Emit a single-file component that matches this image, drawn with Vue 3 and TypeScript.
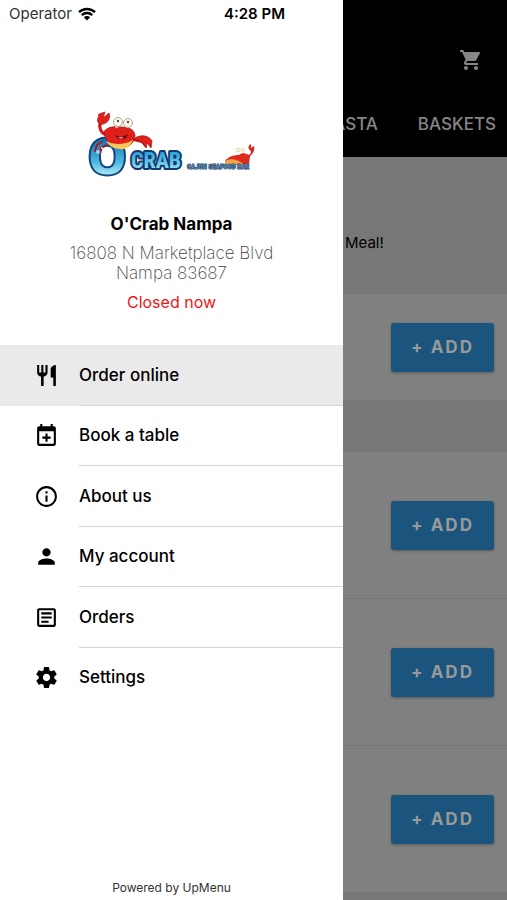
<script setup lang="ts">
interface MenuEntry {
  label: string
  icon: string
}

const menu: MenuEntry[] = [
  {
    label: 'Order online',
    icon: 'M11 9H9V2H7v7H5V2H3v7c0 2.12 1.66 3.84 3.75 3.97V22h2.5v-9.03C11.34 12.84 13 11.12 13 9V2h-2v7zm5-3v8h2.5v8H21V2c-2.76 0-5 2.24-5 4z',
  },
  {
    label: 'Book a table',
    icon: 'M19 3h-1V1h-2v2H8V1H6v2H5C3.9 3 3 3.9 3 5v15c0 1.1.9 2 2 2h14c1.1 0 2-.9 2-2V5c0-1.1-.9-2-2-2zm0 17H5V8h14v12zM11 10h2v3h3v2h-3v3h-2v-3H8v-2h3z',
  },
  {
    label: 'About us',
    icon: 'M11 7h2v2h-2zm0 4h2v6h-2zm1-9C6.48 2 2 6.48 2 12s4.48 10 10 10 10-4.48 10-10S17.52 2 12 2zm0 18c-4.41 0-8-3.59-8-8s3.59-8 8-8 8 3.59 8 8-3.59 8-8 8z',
  },
  {
    label: 'My account',
    icon: 'M12 12c2.21 0 4-1.79 4-4s-1.79-4-4-4-4 1.79-4 4 1.79 4 4 4zm0 2c-2.67 0-8 1.34-8 4v2h16v-2c0-2.66-5.33-4-8-4z',
  },
  {
    label: 'Orders',
    icon: 'M19 5v14H5V5h14m0-2H5c-1.1 0-2 .9-2 2v14c0 1.1.9 2 2 2h14c1.1 0 2-.9 2-2V5c0-1.1-.9-2-2-2zM14 17H7v-2h7v2zm3-4H7v-2h10v2zm0-4H7V7h10v2z',
  },
  {
    label: 'Settings',
    icon: 'M19.43 12.98c.04-.32.07-.64.07-.98s-.03-.66-.07-.98l2.11-1.65c.19-.15.24-.42.12-.64l-2-3.46c-.12-.22-.39-.3-.61-.22l-2.49 1c-.52-.4-1.08-.73-1.69-.98l-.38-2.65C14.46 2.18 14.25 2 14 2h-4c-.25 0-.46.18-.49.42l-.38 2.65c-.61.25-1.17.59-1.69.98l-2.49-1c-.23-.09-.49 0-.61.22l-2 3.46c-.13.22-.07.49.12.64l2.11 1.65c-.04.32-.07.65-.07.98s.03.66.07.98l-2.11 1.65c-.19.15-.24.42-.12.64l2 3.46c.12.22.39.3.61.22l2.49-1c.52.4 1.08.73 1.69.98l.38 2.65c.03.24.24.42.49.42h4c.25 0 .46-.18.49-.42l.38-2.65c.61-.25 1.17-.59 1.69-.98l2.49 1c.23.09.49 0 .61-.22l2-3.46c.12-.22.07-.49-.12-.64l-2.11-1.65zM12 15.5c-1.93 0-3.5-1.57-3.5-3.5s1.57-3.5 3.5-3.5 3.5 1.57 3.5 3.5-1.57 3.5-3.5 3.5z',
  },
]

const active = 'Order online'
const dishes: number[] = [1, 2, 3]
</script>

<template>
  <div class="app">
    <aside class="drawer">
      <div class="status">
        <span class="carrier">Operator</span>
        <svg class="wifi" viewBox="0 0 18 14" aria-hidden="true">
          <path d="M1 5.2a11.6 11.6 0 0 1 16 0M3.8 8.1a7.6 7.6 0 0 1 10.4 0" />
          <path class="dot" d="M9 13.6 5.8 10.3a4.6 4.6 0 0 1 6.4 0z" />
        </svg>
        <time class="clock">4:28 PM</time>
      </div>

      <header class="restaurant">
        <svg class="logo" viewBox="0 0 175 74" role="img" aria-label="O'Crab">
          <defs>
            <linearGradient id="sea" x1="0" y1="0" x2="0" y2="1">
              <stop offset="0.3" stop-color="#1478b8" />
              <stop offset="0.6" stop-color="#4fb8de" />
              <stop offset="0.8" stop-color="#b5ecf8" />
            </linearGradient>
            <linearGradient id="wave" x1="0" y1="0" x2="0" y2="1">
              <stop offset="0.2" stop-color="#2fa4d8" />
              <stop offset="0.8" stop-color="#8fdcf2" />
            </linearGradient>
          </defs>
          <text class="big" x="3" y="67">O</text>
          <text class="word" x="47" y="60">CRAB</text>
          <g>
            <path d="M18 34l-5 3-2 6M22 37l-5 3-1 5M50 32l8 2 4 5" fill="none" stroke="#b91512" stroke-width="2" stroke-linecap="round" />
            <path d="M22 27C17 25 15 20 16 14" fill="none" stroke="#d51b18" stroke-width="3" />
            <path d="M17 17C12 19 16 18 19 16c5-1 8-6 6-11l-6 5 2-6-6 2c-1 1 0 3-1 4-1 2-1 4 3 7z" fill="#e3211c" stroke="#a81210" stroke-width=".7" />
            <path d="M50 31c5-5 15-4 18 2l-1 7-4-5-1 4-4-5z" fill="#de211c" stroke="#a81210" stroke-width=".7" />
            <path d="M20 24c2-4 7-6 17-5 9 0 13 3 14 8 0 8-7 13-14 13-9 0-16-7-17-16z" fill="#df201b" stroke="#a81210" stroke-width=".8" />
            <path d="M22 33c8 4 18 4 27-1-3 7-7 10-13 9-6 0-11-3-14-8z" fill="#fbc858" />
            <path d="M31 27c4 2 9 2 13-1-1 4-3 5-6 5s-6-1-7-4z" fill="#6d0b0b" />
            <path d="M34 29.500c2-1 4-1 6 0-2 1.500-4 1.500-6 0z" fill="#f08175" />
            <path d="M33 20l-1-4M44 20l1-4" stroke="#c9c9ad" stroke-width="3" />
            <circle cx="34" cy="14" r="4.500" fill="#fbfaec" stroke="#aaa895" />
            <circle cx="44" cy="15" r="4.500" fill="#fbfaec" stroke="#aaa895" />
            <circle cx="34" cy="13" r="1.200" fill="#5b5535" />
            <circle cx="44" cy="14" r="1.200" fill="#5b5535" />
          </g>
          <circle cx="14" cy="44" r="2" fill="#8fd6ef" />
          <circle cx="18" cy="40" r="1" fill="#c4edf8" />
          <path d="M141 53c3-4 8-6 14-6 3-3 8-2 11 1l-1 8c-8 1-16 1-24 0z" fill="#de2b1d" />
          <path d="M163 48c4-2 5-4 3-6-3-2-1-5 1-6v4l3-2c1 4-1 8-5 11z" fill="#df201b" />
          <path d="M141 53c5-3 13-2 18 3h-18z" fill="#f4a44a" />
          <circle cx="154" cy="42" r="2" fill="#fbf4d8" stroke="#d0c9a8" stroke-width=".6" />
          <circle cx="159" cy="42" r="2" fill="#fbf4d8" stroke="#d0c9a8" stroke-width=".6" />
          <text class="tagline" x="103" y="61">CAJUN SEAFOOD BAR</text>
        </svg>
        <h1 class="name">O'Crab Nampa</h1>
        <address class="address">16808 N Marketplace Blvd<br />Nampa 83687</address>
        <p class="closed">Closed now</p>
      </header>

      <nav class="menu">
        <a
          v-for="entry in menu"
          :key="entry.label"
          href="#"
          class="entry"
          :class="{ active: entry.label === active }"
        >
          <svg class="icon" viewBox="0 0 24 24" aria-hidden="true"><path :d="entry.icon" /></svg>
          <span class="label">{{ entry.label }}</span>
        </a>
      </nav>

      <footer class="powered">Powered by UpMenu</footer>
    </aside>

    <main class="page">
      <div class="topbar">
        <button class="cart" type="button" aria-label="Cart">
          <svg viewBox="0 0 24 24" aria-hidden="true">
            <path d="M7 18c-1.1 0-1.99.9-1.99 2S5.9 22 7 22s2-.9 2-2-.9-2-2-2zM1 2v2h2l3.6 7.59-1.35 2.45c-.16.28-.25.61-.25.96 0 1.1.9 2 2 2h12v-2H7.42c-.14 0-.25-.11-.25-.25l.03-.12.9-1.63h7.45c.75 0 1.41-.41 1.75-1.03l3.58-6.49c.08-.14.12-.31.12-.48 0-.55-.45-1-1-1H5.21l-.94-2H1zm16 16c-1.1 0-1.99.9-1.99 2s.89 2 1.99 2 2-.9 2-2-.9-2-2-2z" />
          </svg>
        </button>
        <div class="tabs">
          <a href="#">PASTA</a>
          <a href="#">BASKETS</a>
        </div>
      </div>
      <p class="note">Meal!</p>
      <div class="dish first"><button class="add" type="button">+ ADD</button></div>
      <div class="band"></div>
      <div v-for="dish in dishes" :key="dish" class="dish">
        <button class="add" type="button">+ ADD</button>
      </div>
    </main>
  </div>
</template>

<style>
body {
  margin: 0;
  background: #777;
}
</style>

<style scoped>
.app {
  display: flex;
  min-height: 100vh;
  font-family: Inter, 'Liberation Sans', sans-serif;
  color: #000;
}
.app * {
  box-sizing: border-box;
}
a {
  color: inherit;
  text-decoration: none;
}
.drawer {
  flex: 0 0 343px;
  display: flex;
  flex-direction: column;
  background: #fff;
}
.status {
  display: grid;
  grid-template-columns: auto 18px 1fr;
  align-items: center;
  gap: 6px;
  height: 27px;
  padding: 0 58px 0 9px;
  font-size: 15px;
}
.carrier {
  color: #333;
}
.wifi {
  width: 18px;
  height: 14px;
  fill: none;
  stroke: #000;
  stroke-width: 2.4;
}
.wifi .dot {
  fill: #000;
  stroke: none;
}
.clock {
  justify-self: end;
  font-weight: 600;
}
.restaurant {
  display: flex;
  flex-direction: column;
  align-items: center;
  padding-top: 81px;
  height: 318px;
  text-align: center;
}
.logo {
  width: 175px;
  height: 74px;
  overflow: visible;
}
.big {
  font: 800 51px 'Open Sans', sans-serif;
  fill: url(#sea);
  stroke: #12487f;
  stroke-width: 2;
}
.word {
  font: bold 22px 'Liberation Sans Narrow', 'Roboto Condensed', sans-serif;
  fill: url(#wave);
  stroke: #123a6c;
  stroke-width: 4;
  stroke-linejoin: round;
  paint-order: stroke;
}
.tagline {
  font: bold 7px 'Liberation Sans Narrow', 'Roboto Condensed', sans-serif;
  fill: #5d87ab;
  stroke: #1d3f6b;
  stroke-width: 1;
  paint-order: stroke;
}
.name {
  margin: 32px 0 0;
  font-size: 17px;
  line-height: 20px;
  font-weight: 700;
}
.address {
  margin-top: 9px;
  font-size: 17px;
  line-height: 20px;
  font-style: normal;
  font-weight: 200;
  color: #444;
}
.closed {
  margin: 9px 0 0;
  font-size: 16px;
  line-height: 20px;
  color: #f01414;
}
.menu {
  display: grid;
  grid-auto-rows: 1fr;
  height: 363px;
}
.entry {
  display: grid;
  grid-template-columns: 45px 1fr;
  align-items: center;
  padding-left: 34px;
}
.entry.active {
  background: #eaeaea;
}
.icon {
  width: 25px;
  height: 25px;
}
.label {
  display: flex;
  align-items: center;
  height: 100%;
  border-bottom: 1px solid #d4d4d4;
  font-size: 17px;
  font-weight: 500;
}
.entry:last-child .label {
  border-bottom-color: transparent;
}
.powered {
  margin-top: auto;
  padding-bottom: 4px;
  font-size: 12px;
  line-height: 16px;
  text-align: center;
  color: #333;
}
.page {
  flex: 1;
  min-width: 0;
  overflow: hidden;
  background: #777;
}
.topbar {
  display: flex;
  flex-direction: column;
  align-items: flex-end;
  gap: 40px;
  height: 157px;
  padding-top: 48px;
  background: #000;
  color: #868686;
}
.cart {
  width: 24px;
  height: 24px;
  margin-right: 24px;
  padding: 0;
  border: 0;
  background: none;
}
.cart svg {
  display: block;
  width: 24px;
  height: 24px;
  fill: #868686;
}
.tabs {
  display: flex;
  gap: 40px;
  padding-right: 11px;
  font-size: 17px;
  line-height: 24px;
  font-weight: 500;
}
.note {
  height: 137px;
  margin: 0;
  padding: 76px 2px 0;
  font-size: 15px;
  line-height: 20px;
}
.dish {
  display: flex;
  align-items: center;
  justify-content: flex-end;
  height: 147px;
  padding-right: 13px;
  border-bottom: 1px solid #777;
  background: #808080;
}
.dish.first {
  height: 107px;
}
.band {
  height: 51px;
}
.add {
  width: 103px;
  height: 49px;
  padding: 0;
  border: 0;
  border-radius: 3px;
  background: #1b557d;
  box-shadow: 0 1px 3px rgba(0, 0, 0, 0.3);
  color: #999;
  font: 700 17px Inter, 'Liberation Sans', sans-serif;
  letter-spacing: 2px;
}
</style>
